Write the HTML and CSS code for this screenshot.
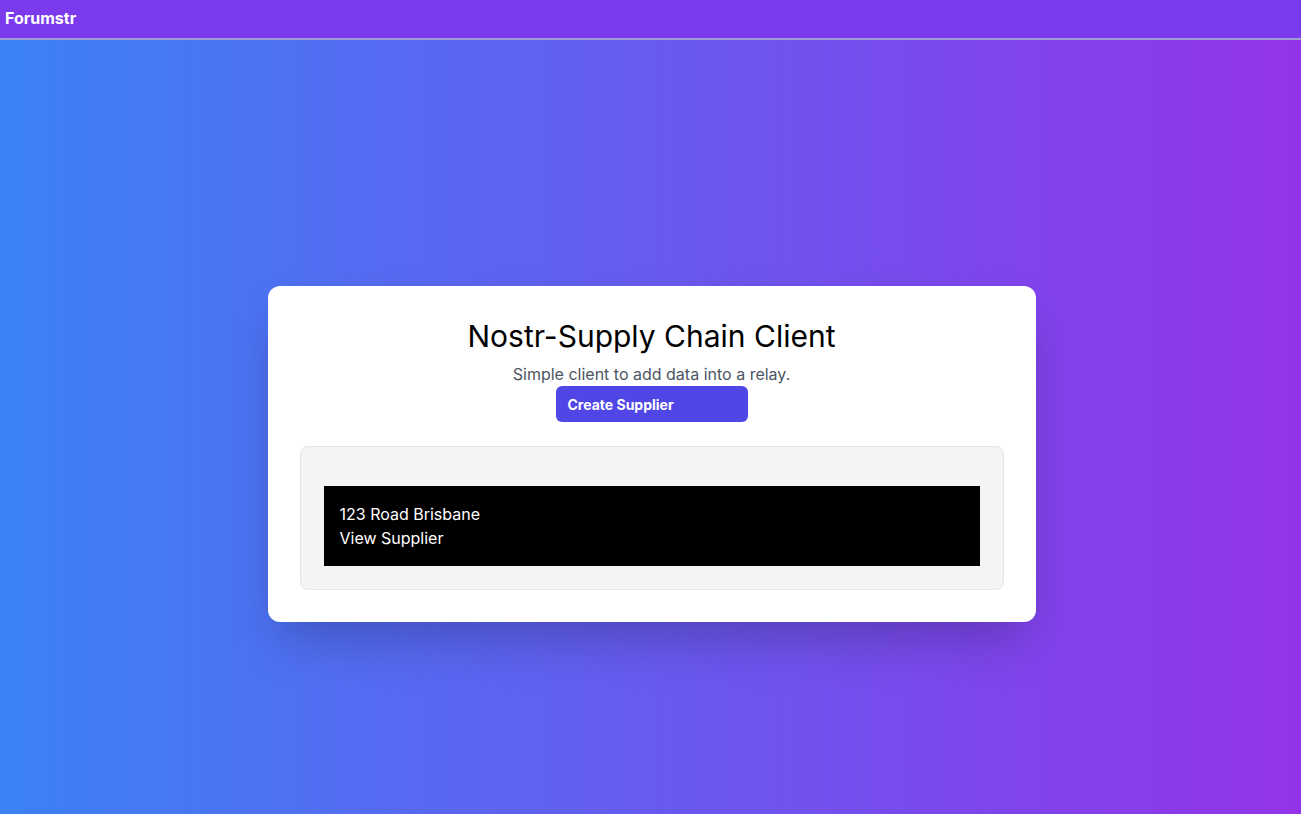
FILE: index.html
```html
<!DOCTYPE html>
<html lang="en">
<head>
<meta charset="utf-8">
<title>Forumstr</title>
<link rel="stylesheet" href="styles.css">
</head>
<body>
<nav class="navbar">
  <span class="brand">Forumstr</span>
</nav>
<main class="main">
  <section class="card">
    <h1 class="title">Nostr-Supply Chain Client</h1>
    <p class="subtitle">Simple client to add data into a relay.</p>
    <button class="btn">Create Supplier</button>
    <div class="list">
      <div class="item">
        <div>123 Road Brisbane</div>
        <div>View Supplier</div>
      </div>
    </div>
  </section>
</main>
</body>
</html>
```
FILE: styles.css
```css
* { box-sizing: border-box; }
html, body { margin: 0; padding: 0; }
body {
  font-family: Inter, "Noto Sans", sans-serif;
  min-height: 814px;
  background: linear-gradient(to right, #3b82f6, #9333ea);
}
.navbar {
  height: 40px;
  background: #7c3aed;
  border-bottom: 2px solid #a09dd2;
  display: flex;
  align-items: center;
  padding: 0 5px 2px;
}
.brand {
  color: #fff;
  font-weight: 700;
  font-size: 16px;
}
.main {
  display: flex;
  justify-content: center;
  padding: 246px 0 0 2px;
}
.card {
  width: 768px;
  background: #fff;
  border-radius: 12px;
  padding: 32px;
  box-shadow: 0 25px 50px -12px rgba(0,0,0,0.25);
  display: flex;
  flex-direction: column;
  align-items: center;
}
.title {
  margin: 0 0 8px;
  font-size: 30px;
  line-height: 36px;
  font-weight: 400;
  color: #000;
}
.subtitle {
  margin: 0;
  font-size: 16px;
  line-height: 24px;
  color: #4b5563;
}
.btn {
  width: 192px;
  height: 36px;
  border: none;
  border-radius: 6px;
  background: #4f46e5;
  color: #fff;
  font-family: inherit;
  font-weight: 700;
  font-size: 14px;
  text-align: left;
  padding: 0 12px;
}
.list {
  align-self: stretch;
  margin-top: 24px;
  background: #f3f4f6;
  border: 1px solid #e5e7eb;
  border-radius: 8px;
  padding: 39px 23px 23px;
}
.item {
  background: #000;
  color: #fff;
  padding: 16px;
  font-size: 16px;
  line-height: 24px;
}
```
